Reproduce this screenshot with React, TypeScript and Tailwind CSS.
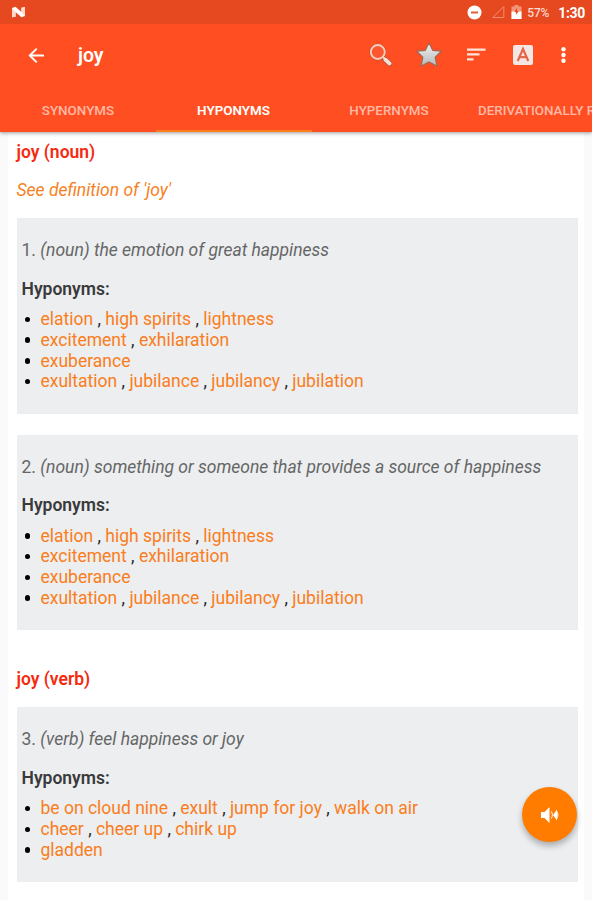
import { useState } from "react";

interface Sense {
  id: number;
  pos: string;
  definition: string;
  groups: string[][];
}

const joyGroups = [
  ["elation", "high spirits", "lightness"],
  ["excitement", "exhilaration"],
  ["exuberance"],
  ["exultation", "jubilance", "jubilancy", "jubilation"],
];

const nounSenses: Sense[] = [
  { id: 1, pos: "noun", definition: "the emotion of great happiness", groups: joyGroups },
  {
    id: 2,
    pos: "noun",
    definition: "something or someone that provides a source of happiness",
    groups: joyGroups,
  },
];

const verbSenses: Sense[] = [
  {
    id: 3,
    pos: "verb",
    definition: "feel happiness or joy",
    groups: [
      ["be on cloud nine", "exult", "jump for joy", "walk on air"],
      ["cheer", "cheer up", "chirk up"],
      ["gladden"],
    ],
  },
];

const tabs = [
  { label: "SYNONYMS", width: "w-[156px]" },
  { label: "HYPONYMS", width: "w-[156px]" },
  { label: "HYPERNYMS", width: "w-[154px]" },
  { label: "DERIVATIONALLY RELATED", width: "w-[200px] pl-3 !justify-start" },
];

function StatusBar() {
  return (
    <div className="flex h-6 items-center bg-[#e64920] pl-[11px] pr-[7px] text-white">
      <svg width="15" height="12" viewBox="0 0 15 12">
        <path d="M1 2 4.500.7 10.500 6V1.800L14 1v9L10.500 11.300 4.500 6v4.700L1 11.300Z" fill="#fff" />
        <path d="M1 2v9.300l3.500-.6V6ZM14 10V1l-3.500.8V6Z" fill="#ffd9cd" />
      </svg>
      <div className="ml-auto flex items-center">
        <svg width="15" height="15" viewBox="0 0 15 15">
          <circle cx="7.500" cy="7.500" r="7" fill="#fff" />
          <rect x="4" y="6.500" width="7" height="2" fill="#e0603c" />
        </svg>
        <svg className="ml-[9px]" width="14" height="14" viewBox="0 0 14 14">
          <path d="M12.800 1.500v11H1.800Z" fill="none" stroke="#f58d70" strokeWidth="1" />
        </svg>
        <svg className="ml-[6px]" width="11" height="14" viewBox="0 0 11 14">
          <path d="M3.500 0h4v1.500h3V14h-10V1.500h3Z" fill="#f4957b" />
          <path d="M.5 6.500h3.500l1.500 2 1.500-2h3.500V14H.5Z" fill="#fff" />
          <path d="M5.800 3 3.500 7h1.700v3L7.600 6H6V3Z" fill="#e64920" />
        </svg>
        <span className="ml-[5px] w-[23px] pt-px text-[12px] font-medium tracking-[-0.1px] text-[#ffd8cc]">57%</span>
        <span className="ml-[8px] pt-[2px] text-[14px] font-bold tracking-[-0.3px]">1:30</span>
      </div>
    </div>
  );
}

function Toolbar() {
  return (
    <div className="flex h-[62px] items-center pl-[28px] pr-[26px]">
      <svg width="17" height="17" viewBox="0 0 17 17" fill="none" stroke="#fff" strokeWidth="1.900">
        <path d="M16 8.500H2M8.700 1.600 1.800 8.500l6.900 6.900" />
      </svg>
      <h1 className="ml-[33px] pt-[2px] text-[19.500px] font-semibold text-white">joy</h1>

      <svg className="ml-auto" width="24" height="24" viewBox="0 0 24 24" fill="none">
        <circle cx="9.800" cy="9" r="7" stroke="#c2502f" strokeWidth="3" />
        <circle cx="9.800" cy="9" r="7" fill="#fb5730" stroke="#f7cdbd" strokeWidth="1.900" />
        <path d="m17 16.400 4.500 4" stroke="#b04a2e" strokeWidth="5.400" strokeLinecap="round" />
        <path d="m14.800 14 2.500 2.200" stroke="#f7cdbd" strokeWidth="2.200" />
        <path d="m17.500 16.800 4 3.600" stroke="#f6ded4" strokeWidth="4" strokeLinecap="round" />
      </svg>
      <svg className="ml-[23px]" width="28" height="28" viewBox="0 0 28 28">
        <defs>
          <linearGradient id="star" x1="0" y1="0" x2="0" y2="1">
            <stop offset="0" stopColor="#f2f2f2" />
            <stop offset="1" stopColor="#b4b8b9" />
          </linearGradient>
        </defs>
        <path
          d="m14 1.800 3.700 7.500 8.700.9-6.200 6.100 1.900 9-8.100-4.300-8.100 4.300 1.900-9-6.200-6.100 8.700-.9Z"
          fill="url(#star)"
          stroke="#a56450"
          strokeWidth="1.200"
          strokeLinejoin="round"
        />
      </svg>
      <svg className="ml-[24px]" width="19" height="14" viewBox="0 0 19 14" fill="#ffe3da">
        <path d="M0 .5h18.500v2.200H0zM0 5.300h12.500v2.200H0zM0 10.200h6.500v2.200H0z" />
      </svg>
      <svg className="ml-[27px]" width="20" height="20" viewBox="0 0 20 20">
        <rect width="20" height="20" rx="2" fill="#f3e7e3" />
        <path d="m4.700 16 5.300-12 5.300 12M6.800 12.200h6.400" fill="none" stroke="#e5674a" strokeWidth="2.200" />
      </svg>
      <svg className="ml-[28px]" width="5" height="18" viewBox="0 0 5 18" fill="#fff">
        <circle cx="2.500" cy="3.200" r="2.200" />
        <circle cx="2.500" cy="9" r="2.200" />
        <circle cx="2.500" cy="14.800" r="2.200" />
      </svg>
    </div>
  );
}

function SenseCard({ sense }: { sense: Sense }) {
  return (
    <section className="bg-[#eceef0] px-[5px] pt-[22px] pb-[21.500px]">
      <p className="whitespace-nowrap text-[#666]">
        {sense.id}. <i className="tracking-[-0.02px]">({sense.pos}) {sense.definition}</i>
      </p>
      <h3 className="mt-[18px] font-semibold text-[#3a3a3a]">Hyponyms:</h3>
      <ul className="mt-[9.500px]">
        {sense.groups.map((words) => (
          <li key={words[0]} className="flex items-center whitespace-pre text-[#222]">
            <span className="ml-[3px] mr-[10.500px] size-[5.500px] rounded-full bg-black" />
            <span>
              {words.map((word, i) => (
                <span key={word}>
                  {i > 0 && " , "}
                  <a className="text-[#fa7d20]">{word}</a>
                </span>
              ))}
            </span>
          </li>
        ))}
      </ul>
    </section>
  );
}

export default function App() {
  const [active, setActive] = useState("HYPONYMS");

  return (
    <div className="relative h-[900px] w-[592px] overflow-hidden bg-[#fafafa] font-['Roboto',sans-serif]">
      <header className="relative h-[132px] bg-[#ff4f22] shadow-[0_1px_4px_rgba(0,0,0,0.4)]">
        <StatusBar />
        <Toolbar />
        <nav className="flex h-[46px]">
          {tabs.map((tab) => (
            <button
              key={tab.label}
              onClick={() => setActive(tab.label)}
              className={`flex shrink-0 items-center justify-center whitespace-nowrap border-b-2 pt-[6px] text-[13.400px] font-medium ${tab.width} ${
                active === tab.label
                  ? "border-[#ff7d1c] pr-px font-semibold text-white"
                  : "border-transparent text-[#ffb9a6]"
              }`}
            >
              {tab.label}
            </button>
          ))}
        </nav>
      </header>

      <main className="mx-2 h-[768px] bg-white pl-[8.500px] pr-[6px] pt-[10px] text-[17.500px] leading-[20.750px]">
        <h2 className="font-semibold text-[#f52a10]">joy (noun)</h2>
        <p className="mt-[17px] italic text-[#f5821f]">See definition of 'joy'</p>
        <div className="mt-[17.500px] flex flex-col gap-[21px]">
          {nounSenses.map((sense) => (
            <SenseCard key={sense.id} sense={sense} />
          ))}
        </div>
        <h2 className="mt-[39px] mb-[17.500px] font-semibold text-[#f52a10]">joy (verb)</h2>
        {verbSenses.map((sense) => (
          <SenseCard key={sense.id} sense={sense} />
        ))}
      </main>

      <button className="absolute left-[522px] top-[787px] flex size-[55px] items-center justify-center rounded-full bg-[#ff7c00] shadow-[0_4px_6px_rgba(0,0,0,0.28)]">
        <svg width="18" height="18" viewBox="0 0 18 18" fill="#fff">
          <path d="M0 6h3.500L8.500 1v16l-5-5H0Z" />
          <path d="M10 5.500c2 1.500 2 5.500 0 7" fill="none" stroke="#ffe0bd" strokeWidth="1.200" />
          <path d="M12 9l4-5.500v11Z" />
          <path d="M16 5c2 2 2 6 0 8Z" fill="#ffe0bd" />
        </svg>
      </button>
    </div>
  );
}
